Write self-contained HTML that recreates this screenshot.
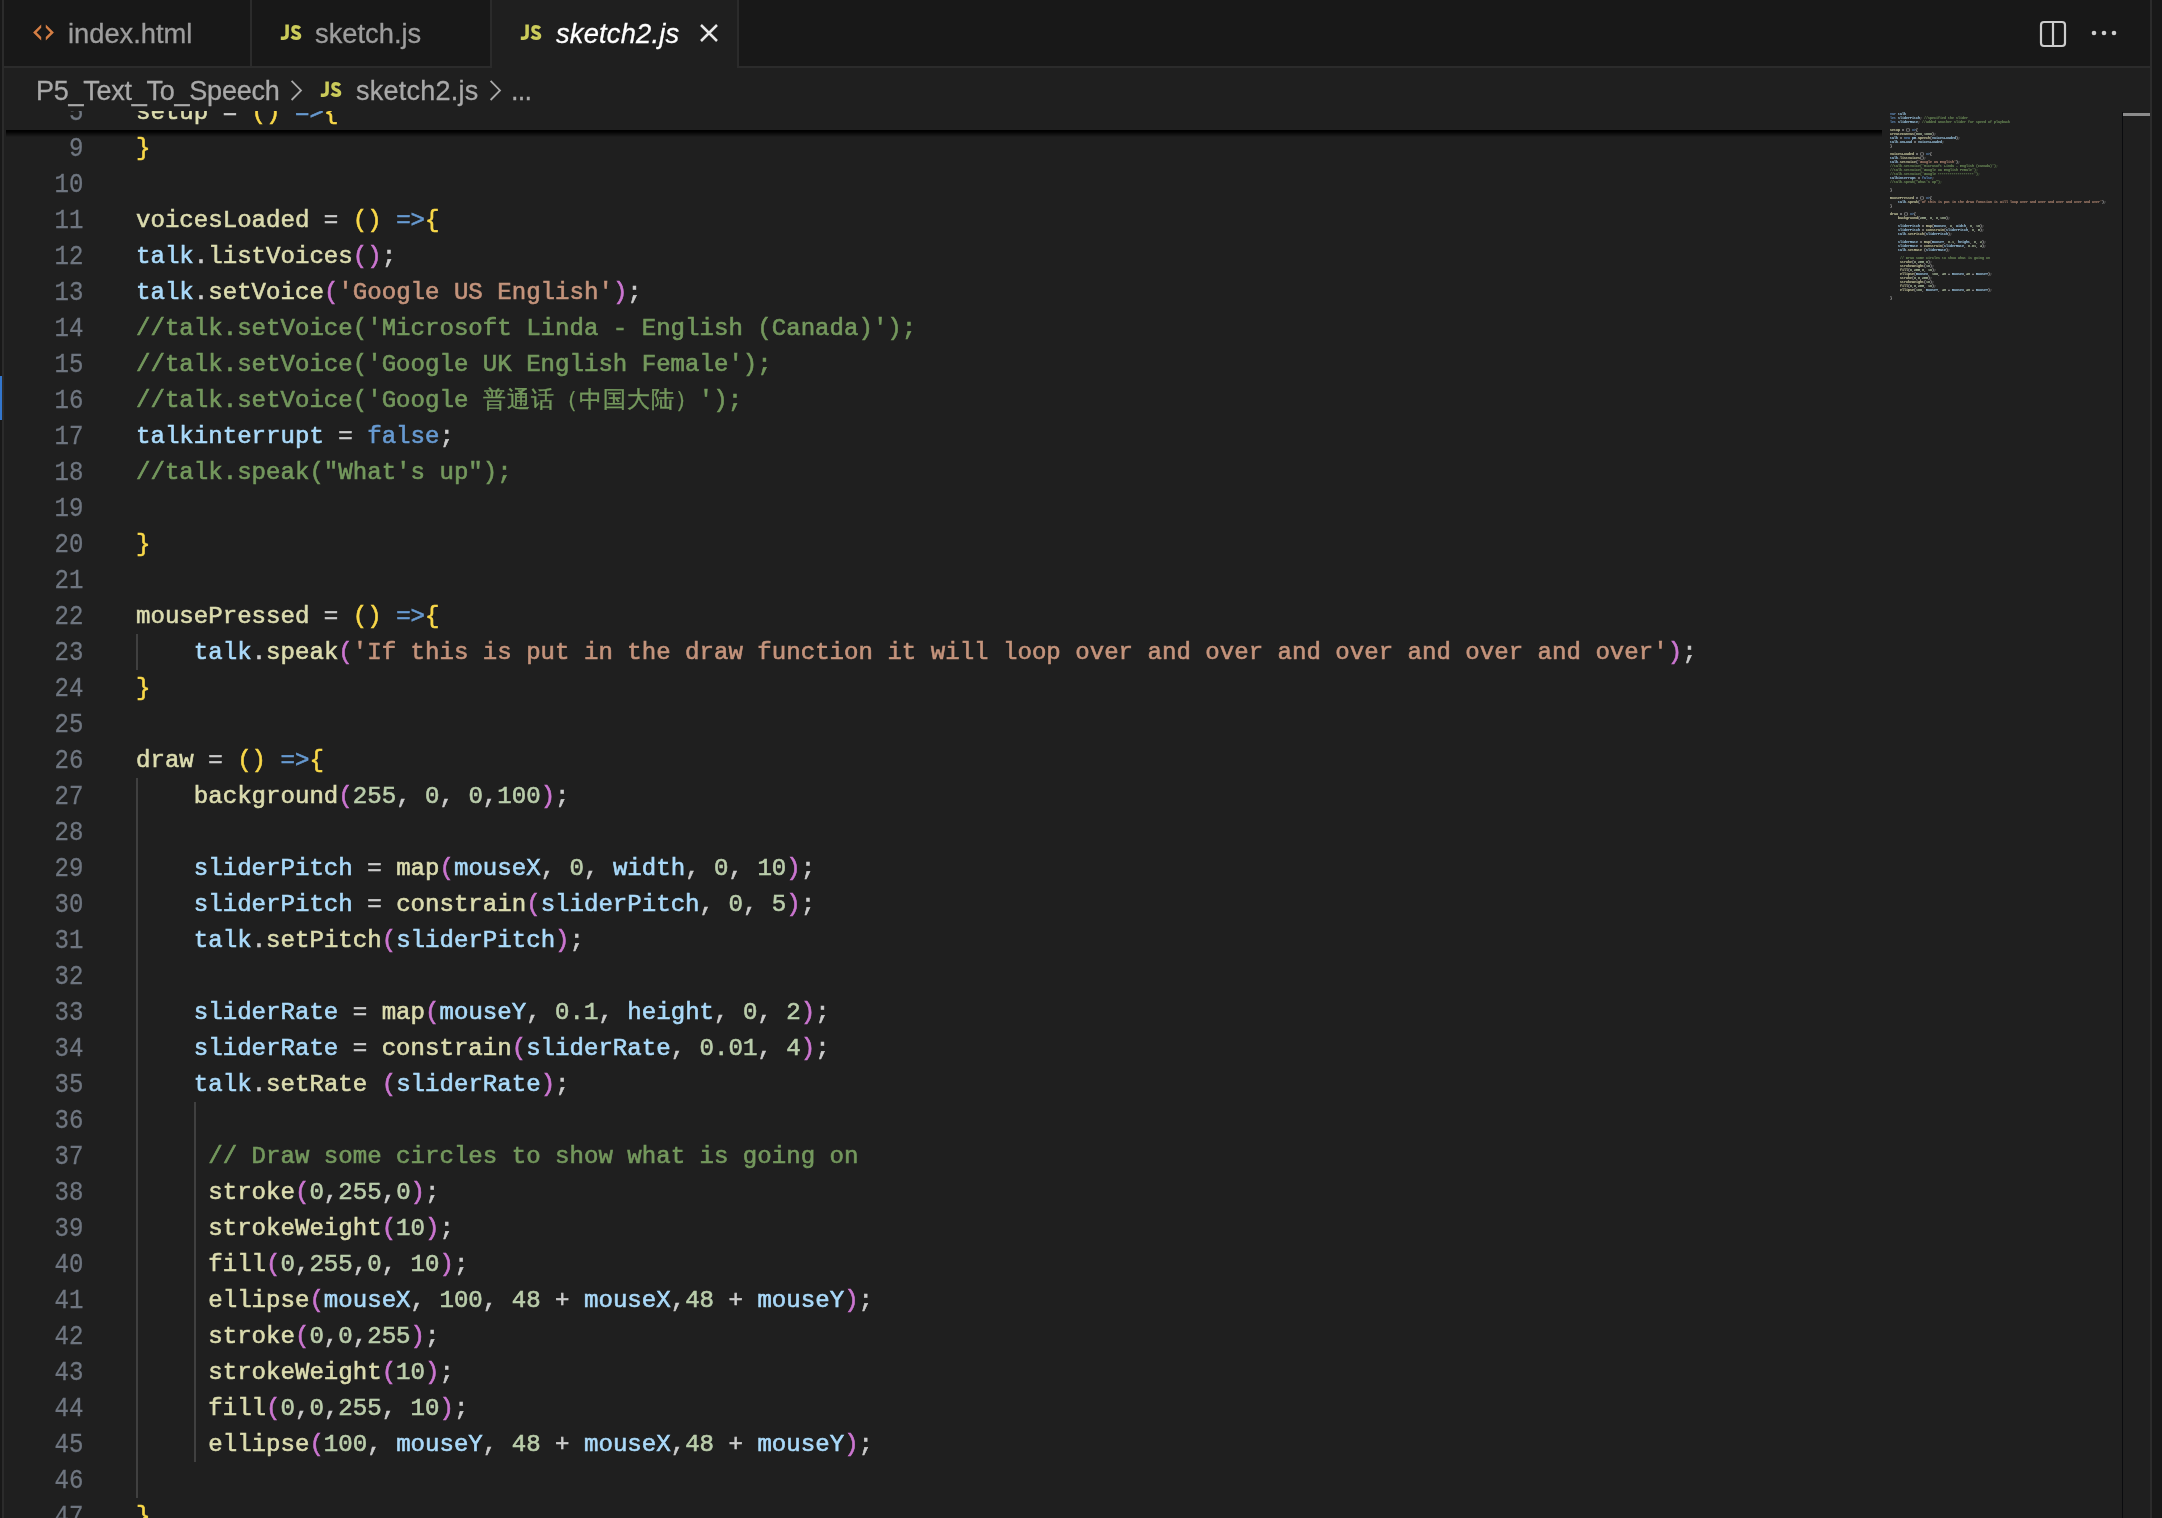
<!DOCTYPE html>
<html><head><meta charset="utf-8"><title>sketch2.js</title><style>
*{margin:0;padding:0;box-sizing:border-box}
#code,#sticky,.tab,.bt,#mini,.gl{will-change:transform}
html,body{width:2162px;height:1518px;overflow:hidden;background:#181818}
body{position:relative;font-family:"Liberation Sans",sans-serif}
.abs{position:absolute}
#lstrip{left:2px;top:0;width:2px;height:1518px;background:#2b2b2b}
#rstrip{left:2150px;top:0;width:2px;height:1518px;background:#2b2b2b}
#tabs{left:4px;top:0;width:2146px;height:68px;background:#181818}
#tabsb{left:4px;top:66px;width:2146px;height:2px;background:#2b2b2b}
.tab{position:absolute;top:0;height:66px;background:#181818;border-right:2px solid #2b2b2b}
.tab.act{height:68px;background:#1f1f1f}
.tt{position:absolute;top:1px;font-size:27.3px;-webkit-text-stroke:0.3px currentColor;line-height:66px;color:#9d9d9d;white-space:nowrap}
.act .tt{color:#ffffff;font-style:italic}
.js{position:absolute;font-family:"Liberation Sans",sans-serif;font-weight:bold;color:#cbcb5a;font-size:19px;line-height:20px;letter-spacing:-0.5px}
#editor{left:4px;top:68px;width:2146px;height:1450px;background:#1f1f1f}
#bc{left:4px;top:68px;width:2118px;height:43px;background:#1f1f1f}
.bt{position:absolute;font-size:27px;line-height:44px;color:#a9a9a9;white-space:nowrap;top:69px;-webkit-text-stroke:0.3px currentColor}
.mono{-webkit-text-stroke:0.6px currentColor;font-family:"Liberation Mono",monospace;font-size:24.080px;line-height:36px;white-space:pre}
.ln{position:absolute;left:136px;height:36px;padding-top:1px}
.nu{-webkit-text-stroke:0.25px currentColor;position:absolute;left:0;width:83.5px;text-align:right;color:#6f7680;height:36px;padding-top:1px;transform:scaleY(1.12);transform-origin:50% 19px}
.f{color:#dcdcaf}.v{color:#aadafa}.s{color:#c5947c}.c{color:#74985d}.n{color:#bacdab}.k{color:#679ad1}
.b1{color:#f9d849}.b2{color:#cc76d1}.b3{color:#4a9df8}
#code{color:#cccccc}
.cj{line-height:0}.cj i{font-style:normal;font-size:23px;letter-spacing:1px;line-height:0;font-family:"Liberation Sans",sans-serif;-webkit-text-stroke:0.4px currentColor}
.guide{position:absolute;width:2px;background:#404040}
#sticky{left:4px;top:111px;width:1878px;height:19px;background:#1f1f1f;overflow:hidden;color:#cccccc}
#shadow{left:6px;top:130px;width:1876px;height:7px;background:linear-gradient(to bottom,rgba(0,0,0,1) 0px,rgba(0,0,0,0.85) 2px,rgba(0,0,0,0.3) 5px,rgba(0,0,0,0) 7px)}
#mini{left:1890px;top:112px;width:232px;height:200px;overflow:hidden}
#minii{position:absolute;left:0;top:0;transform-origin:0 0;transform:scale(0.13840);font-family:"Liberation Mono",monospace;font-size:24.080px;line-height:28.9007px;white-space:pre;color:#cccccc;font-weight:bold}
.ml{height:28.9007px}
#minii .b1,#minii .b2{color:#cccccc}
#ovr{left:2122px;top:112px;width:1px;height:1406px;background:#0a0b0e}
#cur{left:2123px;top:113px;width:27px;height:3px;background:#8c8c8c}
#blue{left:0;top:376px;width:2px;height:44px;background:#3376cd}
</style></head>
<body>
<div class="abs" id="tabs"></div>
<div class="abs" id="tabsb"></div>
<div class="tab" style="left:4px;width:248px">
  <svg class="abs" style="left:0;top:0" width="60" height="60" viewBox="4 0 60 60"><path d="M41.2 24.4 L33.1 32.4 L41.2 40.4 L41.2 37.1 L36.6 32.4 L41.2 27.7 Z M45.8 24.4 L53.9 32.4 L45.8 40.4 L45.8 37.1 L50.4 32.4 L45.8 27.7 Z" fill="#d57e44"/></svg>
  <div class="tt" style="left:64px">index.html</div>
</div>
<div class="tab" style="left:252px;width:240px">
  <svg class="abs" style="left:28px;top:24px" width="24" height="18" viewBox="0 0 24 18"><path d="M7.1 0.6 V10.6 Q7.1 14.3 3.6 14.3 H0.8" fill="none" stroke="#cbcb5a" stroke-width="3.5"/><path d="M19.9 4.4 Q18.2 2.7 15.9 2.7 Q12.9 2.7 12.9 5.5 Q12.9 7.7 16.2 8.8 Q19.6 9.8 19.6 12.1 Q19.6 14.4 16.1 14.4 Q13.6 14.4 11.6 12.6" fill="none" stroke="#cbcb5a" stroke-width="3.4"/></svg>
  <div class="tt" style="left:63px">sketch.js</div>
</div>
<div class="tab act" style="left:492px;width:247px">
  <svg class="abs" style="left:28px;top:24px" width="24" height="18" viewBox="0 0 24 18"><path d="M7.1 0.6 V10.6 Q7.1 14.3 3.6 14.3 H0.8" fill="none" stroke="#cbcb5a" stroke-width="3.5"/><path d="M19.9 4.4 Q18.2 2.7 15.9 2.7 Q12.9 2.7 12.9 5.5 Q12.9 7.7 16.2 8.8 Q19.6 9.8 19.6 12.1 Q19.6 14.4 16.1 14.4 Q13.6 14.4 11.6 12.6" fill="none" stroke="#cbcb5a" stroke-width="3.4"/></svg>
  <div class="tt" style="left:64px;letter-spacing:0.2px">sketch2.js</div>
  <svg class="abs" style="left:207px;top:23px" width="20" height="20" viewBox="0 0 20 20"><path d="M2 2 L18 18 M18 2 L2 18" stroke="#e8e8e8" stroke-width="2.5"/></svg>
</div>
<svg class="abs" style="left:2038px;top:19px" width="30" height="30" viewBox="0 0 30 30"><rect x="3" y="3" width="24" height="24" rx="3" fill="none" stroke="#cccccc" stroke-width="2.2"/><path d="M15 3 V27" stroke="#cccccc" stroke-width="2.2"/></svg>
<svg class="abs" style="left:2086px;top:25px" width="36" height="16" viewBox="0 0 36 16"><circle cx="8" cy="8" r="2.3" fill="#cccccc"/><circle cx="18" cy="8" r="2.3" fill="#cccccc"/><circle cx="28" cy="8" r="2.3" fill="#cccccc"/></svg>
<div class="abs" id="editor"></div>
<div class="abs" id="lstrip"></div>
<div class="abs" id="rstrip"></div>
<div id="code" class="mono abs" style="left:0;top:0;width:1882px;height:1518px;overflow:hidden">
<div class="nu" style="top:130px">9</div><div class="nu" style="top:166px">10</div><div class="nu" style="top:202px">11</div><div class="nu" style="top:238px">12</div><div class="nu" style="top:274px">13</div><div class="nu" style="top:310px">14</div><div class="nu" style="top:346px">15</div><div class="nu" style="top:382px">16</div><div class="nu" style="top:418px">17</div><div class="nu" style="top:454px">18</div><div class="nu" style="top:490px">19</div><div class="nu" style="top:526px">20</div><div class="nu" style="top:562px">21</div><div class="nu" style="top:598px">22</div><div class="nu" style="top:634px">23</div><div class="nu" style="top:670px">24</div><div class="nu" style="top:706px">25</div><div class="nu" style="top:742px">26</div><div class="nu" style="top:778px">27</div><div class="nu" style="top:814px">28</div><div class="nu" style="top:850px">29</div><div class="nu" style="top:886px">30</div><div class="nu" style="top:922px">31</div><div class="nu" style="top:958px">32</div><div class="nu" style="top:994px">33</div><div class="nu" style="top:1030px">34</div><div class="nu" style="top:1066px">35</div><div class="nu" style="top:1102px">36</div><div class="nu" style="top:1138px">37</div><div class="nu" style="top:1174px">38</div><div class="nu" style="top:1210px">39</div><div class="nu" style="top:1246px">40</div><div class="nu" style="top:1282px">41</div><div class="nu" style="top:1318px">42</div><div class="nu" style="top:1354px">43</div><div class="nu" style="top:1390px">44</div><div class="nu" style="top:1426px">45</div><div class="nu" style="top:1462px">46</div><div class="nu" style="top:1498px">47</div>
<div class="guide" style="left:136px;top:634px;height:36px"></div><div class="guide" style="left:136px;top:778px;height:720px"></div><div class="guide" style="left:194px;top:1102px;height:360px"></div>
<div class="ln" style="top:130px"><span class="b1">}</span></div><div class="ln" style="top:166px"></div><div class="ln" style="top:202px"><span class="f">voicesLoaded</span> = <span class="b1">()</span> <span class="k">=&gt;</span><span class="b1">{</span></div><div class="ln" style="top:238px"><span class="v">talk</span>.<span class="f">listVoices</span><span class="b2">()</span>;</div><div class="ln" style="top:274px"><span class="v">talk</span>.<span class="f">setVoice</span><span class="b2">(</span><span class="s">&#x27;Google US English&#x27;</span><span class="b2">)</span>;</div><div class="ln" style="top:310px"><span class="c">//talk.setVoice(&#x27;Microsoft Linda - English (Canada)&#x27;);</span></div><div class="ln" style="top:346px"><span class="c">//talk.setVoice(&#x27;Google UK English Female&#x27;);</span></div><div class="ln" style="top:382px"><span class="c">//talk.setVoice(&#x27;Google </span><span class="c cj"><i>普</i><i>通</i><i>话</i><i>（</i><i>中</i><i>国</i><i>大</i><i>陆</i><i>）</i></span><span class="c">&#x27;);</span></div><div class="ln" style="top:418px"><span class="v">talkinterrupt</span> = <span class="k">false</span>;</div><div class="ln" style="top:454px"><span class="c">//talk.speak(&quot;What&#x27;s up&quot;);</span></div><div class="ln" style="top:490px"></div><div class="ln" style="top:526px"><span class="b1">}</span></div><div class="ln" style="top:562px"></div><div class="ln" style="top:598px"><span class="f">mousePressed</span> = <span class="b1">()</span> <span class="k">=&gt;</span><span class="b1">{</span></div><div class="ln" style="top:634px">    <span class="v">talk</span>.<span class="f">speak</span><span class="b2">(</span><span class="s">&#x27;If this is put in the draw function it will loop over and over and over and over and over&#x27;</span><span class="b2">)</span>;</div><div class="ln" style="top:670px"><span class="b1">}</span></div><div class="ln" style="top:706px"></div><div class="ln" style="top:742px"><span class="f">draw</span> = <span class="b1">()</span> <span class="k">=&gt;</span><span class="b1">{</span></div><div class="ln" style="top:778px">    <span class="f">background</span><span class="b2">(</span><span class="n">255</span>, <span class="n">0</span>, <span class="n">0</span>,<span class="n">100</span><span class="b2">)</span>;</div><div class="ln" style="top:814px"></div><div class="ln" style="top:850px">    <span class="v">sliderPitch</span> = <span class="f">map</span><span class="b2">(</span><span class="v">mouseX</span>, <span class="n">0</span>, <span class="v">width</span>, <span class="n">0</span>, <span class="n">10</span><span class="b2">)</span>;</div><div class="ln" style="top:886px">    <span class="v">sliderPitch</span> = <span class="f">constrain</span><span class="b2">(</span><span class="v">sliderPitch</span>, <span class="n">0</span>, <span class="n">5</span><span class="b2">)</span>;</div><div class="ln" style="top:922px">    <span class="v">talk</span>.<span class="f">setPitch</span><span class="b2">(</span><span class="v">sliderPitch</span><span class="b2">)</span>;</div><div class="ln" style="top:958px"></div><div class="ln" style="top:994px">    <span class="v">sliderRate</span> = <span class="f">map</span><span class="b2">(</span><span class="v">mouseY</span>, <span class="n">0.1</span>, <span class="v">height</span>, <span class="n">0</span>, <span class="n">2</span><span class="b2">)</span>;</div><div class="ln" style="top:1030px">    <span class="v">sliderRate</span> = <span class="f">constrain</span><span class="b2">(</span><span class="v">sliderRate</span>, <span class="n">0.01</span>, <span class="n">4</span><span class="b2">)</span>;</div><div class="ln" style="top:1066px">    <span class="v">talk</span>.<span class="f">setRate</span> <span class="b2">(</span><span class="v">sliderRate</span><span class="b2">)</span>;</div><div class="ln" style="top:1102px"></div><div class="ln" style="top:1138px">     <span class="c">// Draw some circles to show what is going on</span></div><div class="ln" style="top:1174px">     <span class="f">stroke</span><span class="b2">(</span><span class="n">0</span>,<span class="n">255</span>,<span class="n">0</span><span class="b2">)</span>;</div><div class="ln" style="top:1210px">     <span class="f">strokeWeight</span><span class="b2">(</span><span class="n">10</span><span class="b2">)</span>;</div><div class="ln" style="top:1246px">     <span class="f">fill</span><span class="b2">(</span><span class="n">0</span>,<span class="n">255</span>,<span class="n">0</span>, <span class="n">10</span><span class="b2">)</span>;</div><div class="ln" style="top:1282px">     <span class="f">ellipse</span><span class="b2">(</span><span class="v">mouseX</span>, <span class="n">100</span>, <span class="n">48</span> + <span class="v">mouseX</span>,<span class="n">48</span> + <span class="v">mouseY</span><span class="b2">)</span>;</div><div class="ln" style="top:1318px">     <span class="f">stroke</span><span class="b2">(</span><span class="n">0</span>,<span class="n">0</span>,<span class="n">255</span><span class="b2">)</span>;</div><div class="ln" style="top:1354px">     <span class="f">strokeWeight</span><span class="b2">(</span><span class="n">10</span><span class="b2">)</span>;</div><div class="ln" style="top:1390px">     <span class="f">fill</span><span class="b2">(</span><span class="n">0</span>,<span class="n">0</span>,<span class="n">255</span>, <span class="n">10</span><span class="b2">)</span>;</div><div class="ln" style="top:1426px">     <span class="f">ellipse</span><span class="b2">(</span><span class="n">100</span>, <span class="v">mouseY</span>, <span class="n">48</span> + <span class="v">mouseX</span>,<span class="n">48</span> + <span class="v">mouseY</span><span class="b2">)</span>;</div><div class="ln" style="top:1462px"></div><div class="ln" style="top:1498px"><span class="b1">}</span></div>
</div>
<div class="abs" id="bc"></div>
<div class="bt" style="left:36px;letter-spacing:-0.25px">P5_Text_To_Speech</div>
<svg class="abs" style="left:290px;top:79px" width="14" height="22" viewBox="0 0 14 22"><path d="M1.6 1.8 L11 11.4 L1.6 21" fill="none" stroke="#a9a9a9" stroke-width="1.8"/></svg>
<div class="gl abs" style="left:0;top:0"><svg class="abs" style="left:320px;top:81px" width="24" height="18" viewBox="0 0 24 18"><path d="M7.1 0.6 V10.6 Q7.1 14.3 3.6 14.3 H0.8" fill="none" stroke="#cbcb5a" stroke-width="3.5"/><path d="M19.9 4.4 Q18.2 2.7 15.9 2.7 Q12.9 2.7 12.9 5.5 Q12.9 7.7 16.2 8.8 Q19.6 9.8 19.6 12.1 Q19.6 14.4 16.1 14.4 Q13.6 14.4 11.6 12.6" fill="none" stroke="#cbcb5a" stroke-width="3.4"/></svg></div>
<div class="bt" style="left:356px;letter-spacing:0.25px">sketch2.js</div>
<svg class="abs" style="left:489px;top:79px" width="14" height="22" viewBox="0 0 14 22"><path d="M1.6 1.8 L11 11.4 L1.6 21" fill="none" stroke="#a9a9a9" stroke-width="1.8"/></svg>
<div class="bt" style="left:511px;letter-spacing:-0.8px">...</div>
<div class="abs mono" id="sticky">
  <div class="nu" style="left:-4px;top:-17px">5</div>
  <div class="ln" style="left:132px;top:-17px"><span class="f">setup</span> = <span class="b1">()</span> <span class="k">=&gt;</span><span class="b1">{</span></div>
</div>
<div class="abs" id="shadow"></div>
<div class="abs" id="mini"><div id="minii"><div class="ml"><span class="k">var</span><span class="p"> </span><span class="v">talk</span></div><div class="ml"><span class="k">let</span><span class="p"> </span><span class="v">sliderPitch</span><span class="p">; </span><span class="c">//specified the slider</span></div><div class="ml"><span class="k">let</span><span class="p"> </span><span class="v">sliderRate</span><span class="p">; </span><span class="c">//added another slider for speed of playback</span></div><div class="ml"></div><div class="ml"><span class="f">setup</span><span class="p"> = </span><span class="b1">()</span><span class="p"> </span><span class="k">=&gt;</span><span class="b1">{</span></div><div class="ml"><span class="f">createCanvas</span><span class="b2">(</span><span class="n">800</span><span class="p">,</span><span class="n">1000</span><span class="b2">)</span><span class="p">;</span></div><div class="ml"><span class="v">talk</span><span class="p"> = </span><span class="k">new</span><span class="p"> </span><span class="v">p5</span><span class="p">.</span><span class="f">Speech</span><span class="b2">(</span><span class="v">voicesLoaded</span><span class="b2">)</span><span class="p">;</span></div><div class="ml"><span class="v">talk</span><span class="p">.</span><span class="v">onLoad</span><span class="p"> = </span><span class="v">voicesLoaded</span><span class="p">;</span></div><div class="ml"><span class="b1">}</span></div><div class="ml"></div><div class="ml"><span class="f">voicesLoaded</span><span class="p"> = </span><span class="b1">()</span><span class="p"> </span><span class="k">=&gt;</span><span class="b1">{</span></div><div class="ml"><span class="v">talk</span><span class="p">.</span><span class="f">listVoices</span><span class="b2">()</span><span class="p">;</span></div><div class="ml"><span class="v">talk</span><span class="p">.</span><span class="f">setVoice</span><span class="b2">(</span><span class="s">&#x27;Google US English&#x27;</span><span class="b2">)</span><span class="p">;</span></div><div class="ml"><span class="c">//talk.setVoice(&#x27;Microsoft Linda - English (Canada)&#x27;);</span></div><div class="ml"><span class="c">//talk.setVoice(&#x27;Google UK English Female&#x27;);</span></div><div class="ml"><span class="c">//talk.setVoice(&#x27;Google </span><span class="c">▪▪▪▪▪▪▪▪▪▪▪▪▪▪▪▪▪▪</span><span class="c">&#x27;);</span></div><div class="ml"><span class="v">talkinterrupt</span><span class="p"> = </span><span class="k">false</span><span class="p">;</span></div><div class="ml"><span class="c">//talk.speak(&quot;What&#x27;s up&quot;);</span></div><div class="ml"></div><div class="ml"><span class="b1">}</span></div><div class="ml"></div><div class="ml"><span class="f">mousePressed</span><span class="p"> = </span><span class="b1">()</span><span class="p"> </span><span class="k">=&gt;</span><span class="b1">{</span></div><div class="ml"><span class="p">    </span><span class="v">talk</span><span class="p">.</span><span class="f">speak</span><span class="b2">(</span><span class="s">&#x27;If this is put in the draw function it will loop over and over and over and over and over&#x27;</span><span class="b2">)</span><span class="p">;</span></div><div class="ml"><span class="b1">}</span></div><div class="ml"></div><div class="ml"><span class="f">draw</span><span class="p"> = </span><span class="b1">()</span><span class="p"> </span><span class="k">=&gt;</span><span class="b1">{</span></div><div class="ml"><span class="p">    </span><span class="f">background</span><span class="b2">(</span><span class="n">255</span><span class="p">, </span><span class="n">0</span><span class="p">, </span><span class="n">0</span><span class="p">,</span><span class="n">100</span><span class="b2">)</span><span class="p">;</span></div><div class="ml"></div><div class="ml"><span class="p">    </span><span class="v">sliderPitch</span><span class="p"> = </span><span class="f">map</span><span class="b2">(</span><span class="v">mouseX</span><span class="p">, </span><span class="n">0</span><span class="p">, </span><span class="v">width</span><span class="p">, </span><span class="n">0</span><span class="p">, </span><span class="n">10</span><span class="b2">)</span><span class="p">;</span></div><div class="ml"><span class="p">    </span><span class="v">sliderPitch</span><span class="p"> = </span><span class="f">constrain</span><span class="b2">(</span><span class="v">sliderPitch</span><span class="p">, </span><span class="n">0</span><span class="p">, </span><span class="n">5</span><span class="b2">)</span><span class="p">;</span></div><div class="ml"><span class="p">    </span><span class="v">talk</span><span class="p">.</span><span class="f">setPitch</span><span class="b2">(</span><span class="v">sliderPitch</span><span class="b2">)</span><span class="p">;</span></div><div class="ml"></div><div class="ml"><span class="p">    </span><span class="v">sliderRate</span><span class="p"> = </span><span class="f">map</span><span class="b2">(</span><span class="v">mouseY</span><span class="p">, </span><span class="n">0.1</span><span class="p">, </span><span class="v">height</span><span class="p">, </span><span class="n">0</span><span class="p">, </span><span class="n">2</span><span class="b2">)</span><span class="p">;</span></div><div class="ml"><span class="p">    </span><span class="v">sliderRate</span><span class="p"> = </span><span class="f">constrain</span><span class="b2">(</span><span class="v">sliderRate</span><span class="p">, </span><span class="n">0.01</span><span class="p">, </span><span class="n">4</span><span class="b2">)</span><span class="p">;</span></div><div class="ml"><span class="p">    </span><span class="v">talk</span><span class="p">.</span><span class="f">setRate</span><span class="p"> </span><span class="b2">(</span><span class="v">sliderRate</span><span class="b2">)</span><span class="p">;</span></div><div class="ml"></div><div class="ml"><span class="p">     </span><span class="c">// Draw some circles to show what is going on</span></div><div class="ml"><span class="p">     </span><span class="f">stroke</span><span class="b2">(</span><span class="n">0</span><span class="p">,</span><span class="n">255</span><span class="p">,</span><span class="n">0</span><span class="b2">)</span><span class="p">;</span></div><div class="ml"><span class="p">     </span><span class="f">strokeWeight</span><span class="b2">(</span><span class="n">10</span><span class="b2">)</span><span class="p">;</span></div><div class="ml"><span class="p">     </span><span class="f">fill</span><span class="b2">(</span><span class="n">0</span><span class="p">,</span><span class="n">255</span><span class="p">,</span><span class="n">0</span><span class="p">, </span><span class="n">10</span><span class="b2">)</span><span class="p">;</span></div><div class="ml"><span class="p">     </span><span class="f">ellipse</span><span class="b2">(</span><span class="v">mouseX</span><span class="p">, </span><span class="n">100</span><span class="p">, </span><span class="n">48</span><span class="p"> + </span><span class="v">mouseX</span><span class="p">,</span><span class="n">48</span><span class="p"> + </span><span class="v">mouseY</span><span class="b2">)</span><span class="p">;</span></div><div class="ml"><span class="p">     </span><span class="f">stroke</span><span class="b2">(</span><span class="n">0</span><span class="p">,</span><span class="n">0</span><span class="p">,</span><span class="n">255</span><span class="b2">)</span><span class="p">;</span></div><div class="ml"><span class="p">     </span><span class="f">strokeWeight</span><span class="b2">(</span><span class="n">10</span><span class="b2">)</span><span class="p">;</span></div><div class="ml"><span class="p">     </span><span class="f">fill</span><span class="b2">(</span><span class="n">0</span><span class="p">,</span><span class="n">0</span><span class="p">,</span><span class="n">255</span><span class="p">, </span><span class="n">10</span><span class="b2">)</span><span class="p">;</span></div><div class="ml"><span class="p">     </span><span class="f">ellipse</span><span class="b2">(</span><span class="n">100</span><span class="p">, </span><span class="v">mouseY</span><span class="p">, </span><span class="n">48</span><span class="p"> + </span><span class="v">mouseX</span><span class="p">,</span><span class="n">48</span><span class="p"> + </span><span class="v">mouseY</span><span class="b2">)</span><span class="p">;</span></div><div class="ml"></div><div class="ml"><span class="b1">}</span></div></div></div>
<div class="abs" id="ovr"></div>
<div class="abs" id="cur"></div>
<div class="abs" id="blue"></div>
</body></html>
